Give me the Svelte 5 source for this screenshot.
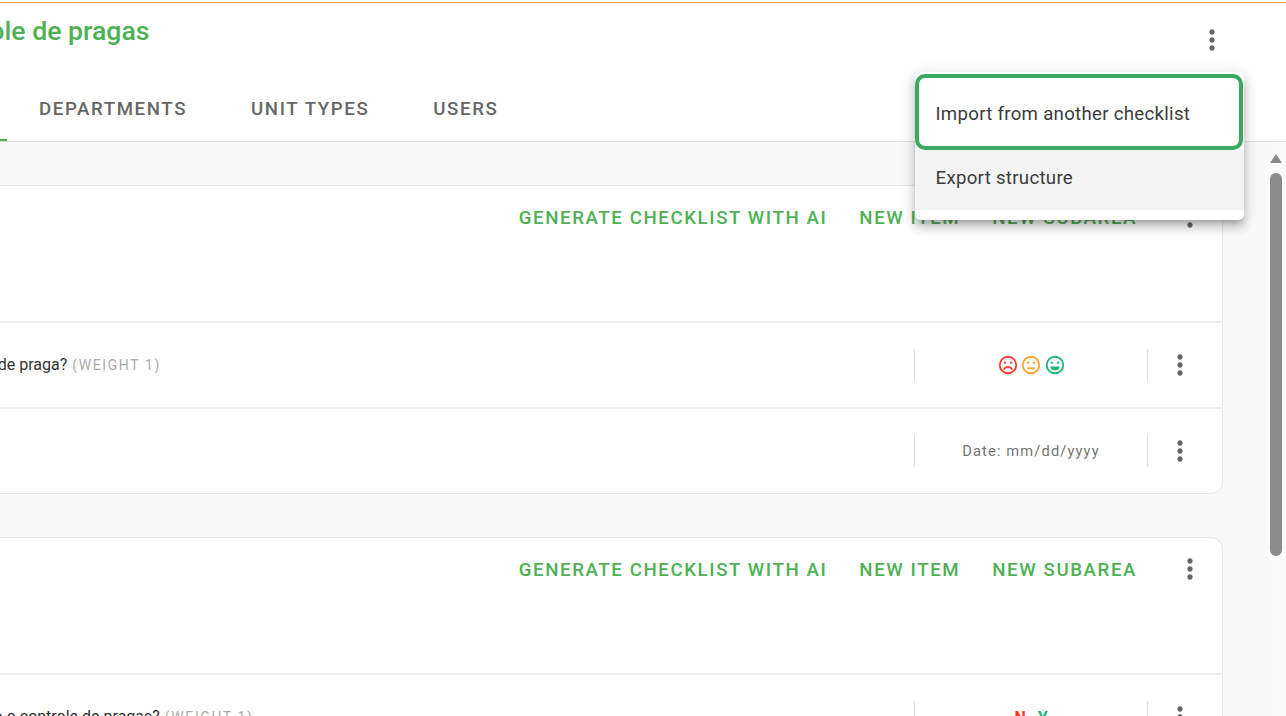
<script>
  const dots = "M12 8c1.1 0 2-.9 2-2s-.9-2-2-2-2 .9-2 2 .9 2 2 2zm0 2c-1.1 0-2 .9-2 2s.9 2 2 2 2-.9 2-2-.9-2-2-2zm0 6c-1.1 0-2 .9-2 2s.9 2 2 2 2-.9 2-2-.9-2-2-2z";
</script>

{#snippet more()}
  <svg class="more" viewBox="0 0 24 24" aria-hidden="true"><path d={dots} /></svg>
{/snippet}

{#snippet actions()}
  <div class="card-head">
    <span class="action">GENERATE CHECKLIST WITH AI</span>
    <span class="action">NEW ITEM</span>
    <span class="action">NEW SUBAREA</span>
    <span class="head-more">{@render more()}</span>
  </div>
{/snippet}

<div class="root">
  <div class="accent"></div>
  <header class="header">
    <div class="title-row">
      <h1>Controle de pragas</h1>
      <span class="top-more">{@render more()}</span>
    </div>
    <nav class="tabs">
      <span class="tab active">STRUCTURE</span>
      <span class="tab">DEPARTMENTS</span>
      <span class="tab">UNIT TYPES</span>
      <span class="tab">USERS</span>
    </nav>
  </header>

  <div class="body">
    <main class="content">
      <section class="card">
        {@render actions()}
        <div class="row">
          <div class="question q1">Existem sinais de praga? <span class="weight">(WEIGHT 1)</span></div>
          <div class="answer">
            <svg class="face sad" viewBox="0 0 24 24"><circle cx="12" cy="12" r="9" /><circle class="eye" cx="8.6" cy="9.4" r="1.3" /><circle class="eye" cx="15.4" cy="9.4" r="1.3" /><path d="M7.6 17c1-2 2.6-3 4.400-3s3.400 1 4.400 3" /></svg>
            <svg class="face neutral" viewBox="0 0 24 24"><circle cx="12" cy="12" r="9" /><circle class="eye" cx="8.6" cy="9.600" r="1.3" /><circle class="eye" cx="15.4" cy="9.600" r="1.3" /><path d="M8 15.600h8" /></svg>
            <svg class="face happy" viewBox="0 0 24 24"><circle cx="12" cy="12" r="9" /><circle class="eye" cx="8.6" cy="9.4" r="1.3" /><circle class="eye" cx="15.4" cy="9.4" r="1.3" /><path d="M7 13.500h10c0 2.800-2.200 4.500-5 4.500s-5-1.700-5-4.500z" /></svg>
          </div>
          <div class="row-more">{@render more()}</div>
        </div>
        <div class="row">
          <div class="question"></div>
          <div class="answer date">Date: mm/dd/yyyy</div>
          <div class="row-more">{@render more()}</div>
        </div>
      </section>

      <section class="card">
        {@render actions()}
        <div class="row">
          <div class="question q2">Foi realizado o controle de pragas? <span class="weight">(WEIGHT 1)</span></div>
          <div class="answer yn"><span class="no">N</span><span class="yes">Y</span></div>
          <div class="row-more">{@render more()}</div>
        </div>
      </section>
    </main>
    <aside class="scrollbar">
      <span class="arrow"></span>
      <span class="thumb"></span>
    </aside>
  </div>

  <div class="menu">
    <div class="menu-item focused">Import from another checklist</div>
    <div class="menu-item hovered">Export structure</div>
  </div>
</div>

<style>
  :global(body) {
    margin: 0;
    overflow: hidden;
    background: #fff;
  }
  .root {
    position: relative;
    width: 1436px;
    height: 716px;
    margin-left: -150px;
    overflow: hidden;
    font-family: Roboto, "Liberation Sans", sans-serif;
    color: #333;
  }
  .accent {
    height: 1px;
    margin-top: 2px;
    background: #ffa347;
  }
  .header {
    height: 138px;
    background: #fff;
    border-bottom: 1px solid #e0e0e0;
    display: flex;
    flex-direction: column;
  }
  .title-row {
    height: 92px;
    display: flex;
    justify-content: space-between;
    align-items: flex-start;
    padding-left: 74px;
    padding-right: 58.5px;
  }
  h1 {
    margin: 11px 0 0;
    font-size: 26.67px;
    line-height: 34px;
    font-weight: 500;
    color: #4fb155;
  }
  .top-more {
    display: block;
    margin-top: 21px;
    height: 32px;
  }
  .more {
    display: block;
    width: 32px;
    height: 32px;
    fill: #666;
  }
  .tabs {
    display: flex;
    flex: 1;
  }
  .tab {
    position: relative;
    padding: 0 32px;
    font-size: 18.67px;
    font-weight: 500;
    letter-spacing: 1.6px;
    line-height: 28px;
    color: #666;
  }
  .tab.active {
    width: 157px;
    box-sizing: border-box;
    color: #4fb155;
    border-bottom: 2px solid #4fb155;
    height: 46px;
    padding-left: 20px;
  }
  .body {
    display: flex;
    height: 574px;
    background: #f9f9f9;
  }
  .content {
    flex: 1;
    min-width: 0;
    padding: 43px 45px 0 24px;
    display: flex;
    flex-direction: column;
    gap: 43px;
  }
  .card {
    flex: none;
    background: #fff;
    border: 1px solid #e6e6e6;
    border-radius: 12px;
  }
  .card-head {
    height: 135px;
    display: flex;
    justify-content: flex-end;
    gap: 32px;
    box-sizing: border-box;
    padding: 18px 16px 0 0;
    position: relative;
  }
  .action {
    font-size: 18.67px;
    font-weight: 500;
    letter-spacing: 1.6px;
    line-height: 28px;
    color: #4fb155;
  }
  .head-more {
    display: block;
    margin: -3px 0 0 5px;
  }
  .row {
    height: 84px;
    border-top: 2px solid #ededed;
    display: flex;
    align-items: center;
  }
  .question {
    flex: 1;
    font-size: 16px;
    color: #333;
    white-space: nowrap;
    overflow: hidden;
    padding-bottom: 2px;
  }
  .q1 {
    padding-left: 16px;
  }
  .q2 {
    padding-left: 37px;
  }
  .weight {
    font-size: 14px;
    letter-spacing: 1.6px;
    color: #aaa;
    margin-left: 1px;
  }
  .answer {
    width: 232px;
    height: 32px;
    flex: none;
    border-left: 1px solid #e0e0e0;
    border-right: 1px solid #e0e0e0;
    display: flex;
    align-items: center;
    justify-content: center;
    gap: 1.500px;
  }
  .date {
    font-size: 14.67px;
    letter-spacing: 1.13px;
    color: #757575;
  }
  .yn {
    gap: 12px;
    font-size: 16px;
    font-weight: 700;
  }
  .no { color: #ff3527; }
  .yes { color: #14b371; }
  .row-more {
    width: 74px;
    flex: none;
    display: flex;
    justify-content: flex-start;
    padding-left: 16px;
    box-sizing: border-box;
  }
  .face {
    width: 22px;
    height: 22px;
    fill: none;
    stroke-width: 2;
  }
  .face .eye { stroke: none; }
  .sad { stroke: #ff3b30; }
  .sad .eye { fill: #ff3b30; }
  .neutral { stroke: #ffa42e; }
  .neutral .eye { fill: #ffa42e; }
  .happy { stroke: #1fb578; }
  .happy .eye { fill: #1fb578; }
  .happy path { fill: #1fb578; stroke: none; }
  .scrollbar {
    width: 18px;
    flex: none;
    box-sizing: border-box;
    padding-right: 2px;
    display: flex;
    flex-direction: column;
    align-items: center;
    background: #fafafa;
  }
  .arrow {
    width: 0;
    height: 0;
    margin-top: 12px;
    border-left: 6.500px solid transparent;
    border-right: 6.500px solid transparent;
    border-bottom: 9px solid #8b8b8b;
  }
  .thumb {
    width: 12px;
    height: 383px;
    margin-top: 10px;
    background: #8b8b8b;
    border-radius: 6px;
  }
  .menu {
    position: absolute;
    left: 1064.500px;
    top: 72px;
    width: 329px;
    height: 148px;
    box-sizing: border-box;
    background: #fff;
    border-radius: 6px;
    box-shadow: 0 5px 5px -3px rgba(0,0,0,.2), 0 8px 10px 1px rgba(0,0,0,.14), 0 3px 14px 2px rgba(0,0,0,.12);
    overflow: hidden;
    padding-top: 2px;
  }
  .menu-item {
    font-size: 18.67px;
    line-height: 28px;
    letter-spacing: 0.28px;
    color: #3c3c3c;
    padding-left: 21px;
    box-sizing: border-box;
  }
  .focused {
    height: 76px;
    margin: 0 0.5px;
    padding: 22px 0 0 16.500px;
    border: 4px solid #3aa85f;
    border-radius: 10px;
  }
  .hovered {
    height: 60px;
    background: #f4f4f4;
    padding-top: 14px;
  }
</style>
